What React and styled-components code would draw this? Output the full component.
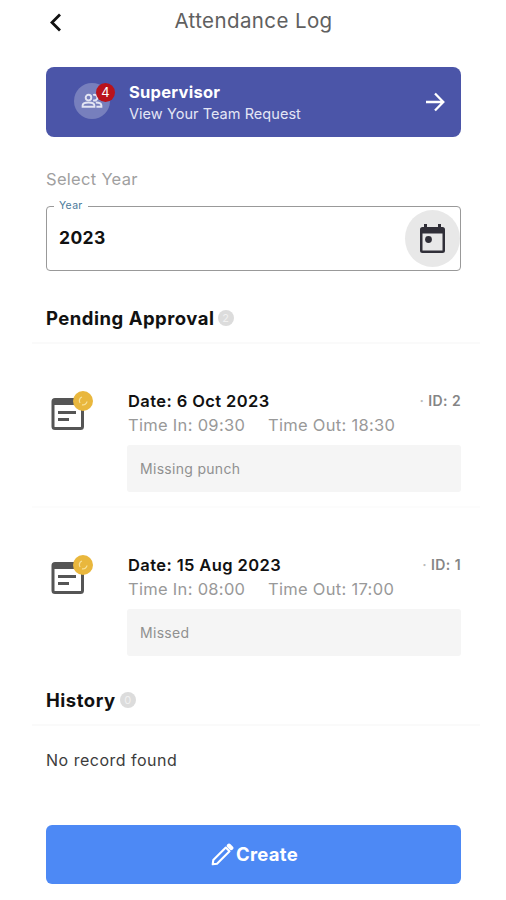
import React from "react";
import styled, { createGlobalStyle } from "styled-components";

const GlobalStyle = createGlobalStyle`
  * {
    box-sizing: border-box;
  }
  body {
    margin: 0;
    background: #fff;
    font-family: Inter, "Liberation Sans", sans-serif;
  }
`;

const Container = styled.div`
  width: 506px;
  height: 900px;
  overflow: hidden;
  padding: 0 45px 0 46px;
  color: #111;
  background: #fff;
`;

const Header = styled.header`
  display: grid;
  grid-template-columns: 20px 1fr 20px;
  align-items: center;
  height: 43px;
`;

const BackButton = styled.button`
  display: flex;
  padding: 0;
  border: 0;
  background: none;
`;

const Title = styled.h1`
  margin: 0;
  padding-bottom: 2px;
  font-size: 20.5px;
  font-weight: 400;
  line-height: 41px;
  letter-spacing: 0.4px;
  text-align: center;
  color: #606060;
`;

const Banner = styled.section`
  display: flex;
  align-items: center;
  height: 70px;
  margin-top: 24px;
  padding: 0 16px 0 28px;
  border-radius: 8px;
  color: #fff;
  background: #4b55a8;
`;

const Avatar = styled.div`
  position: relative;
  display: flex;
  align-items: center;
  justify-content: center;
  width: 36px;
  height: 36px;
  margin-bottom: 2px;
  border-radius: 50%;
  background: #777fbd;
`;

const AlertBadge = styled.span`
  position: absolute;
  top: 0;
  right: -5px;
  width: 19px;
  height: 19px;
  border-radius: 50%;
  font-size: 13px;
  line-height: 19px;
  text-align: center;
  background: #b9131b;
`;

const BannerText = styled.div`
  flex: 1;
  margin-left: 19px;
  padding-top: 1px;
`;

const BannerTitle = styled.div`
  font-size: 16.5px;
  font-weight: 700;
  line-height: 22px;
  letter-spacing: 0.25px;
`;

const BannerInfo = styled.div`
  font-size: 14.5px;
  line-height: 22px;
  letter-spacing: 0.05px;
  color: #e4e6f5;
`;

const Label = styled.div`
  margin-top: 31px;
  font-size: 16.5px;
  line-height: 22px;
  letter-spacing: 0.3px;
  color: #a0a0a0;
`;

const Field = styled.fieldset`
  height: 71px;
  margin: 10px 0 0;
  padding: 0 0 0 12px;
  border: 1.5px solid #999;
  border-radius: 4px;
`;

const Legend = styled.legend`
  margin-left: -5px;
  padding: 0 5px;
  font-size: 10.5px;
  line-height: 12px;
  letter-spacing: 0.3px;
  color: #4b7a9b;
`;

const FieldRow = styled.div`
  display: flex;
  align-items: center;
  justify-content: space-between;
  height: 58px;
  margin-top: -3px;
`;

const Year = styled.span`
  padding-bottom: 1px;
  font-size: 17.5px;
  font-weight: 700;
  letter-spacing: 0.4px;
`;

const CalendarButton = styled.button`
  display: flex;
  align-items: center;
  justify-content: center;
  width: 55px;
  height: 57px;
  padding: 0;
  border: 0;
  border-radius: 50%;
  background: #e8e8e8;
`;

const SectionHead = styled.div`
  display: flex;
  align-items: center;
  height: 38px;
  margin: ${(props) => props.$top}px -19px 0 -14px;
  padding: 0 19px 12px 14px;
  border-bottom: 2px solid #fafafa;
`;

const SectionTitle = styled.h2`
  margin: 0;
  font-size: 18.5px;
  font-weight: 700;
  line-height: 24px;
  letter-spacing: 0.5px;
`;

const Count = styled.span`
  width: 16px;
  height: 16px;
  margin-left: ${(props) => props.$gap}px;
  border-radius: 50%;
  font-size: 11px;
  line-height: 16px;
  text-align: center;
  color: #f1f1f1;
  background: #dcdcdc;
`;

const Item = styled.article`
  display: flex;
  height: 164px;
  margin: 0 -19px 0 -14px;
  padding: 45px 19px 0 14px;
  border-bottom: ${(props) => (props.$last ? "0" : "2px solid #fcfcfc")};
`;

const ItemIcon = styled.div`
  position: relative;
  flex: none;
  width: 81px;
  padding: 8px 0 0 5px;
`;

const StatusBadge = styled.span`
  position: absolute;
  top: 2px;
  left: 27px;
  display: flex;
  align-items: center;
  justify-content: center;
  width: 20px;
  height: 20px;
  border-radius: 50%;
  background: #e9b73d;
`;

const ItemBody = styled.div`
  flex: 1;
`;

const ItemTop = styled.div`
  display: flex;
  justify-content: space-between;
  padding-left: 1px;
  line-height: 24px;
`;

const DateText = styled.span`
  font-size: 16.5px;
  font-weight: 600;
  letter-spacing: 0.4px;
`;

const IdText = styled.span`
  font-size: 14px;
  font-weight: 600;
  letter-spacing: 0.4px;
  color: #858585;
`;

const Dot = styled.span`
  color: #bbb;
`;

const Times = styled.div`
  display: flex;
  padding-left: 1px;
  font-size: 16.5px;
  line-height: 24px;
  letter-spacing: 0.3px;
  color: #999;
`;

const TimeIn = styled.span`
  width: 140px;
`;

const Note = styled.p`
  height: 47px;
  margin: 8px 0 0;
  padding-left: 13px;
  border-radius: 3px;
  font-size: 14px;
  line-height: 47px;
  letter-spacing: 0.3px;
  color: #909090;
  background: #f5f5f5;
`;

const Empty = styled.p`
  margin: 22px 0 0;
  font-size: 16px;
  line-height: 24px;
  letter-spacing: 0.5px;
  color: #3c3c3c;
`;

const CreateButton = styled.button`
  display: flex;
  align-items: center;
  justify-content: center;
  gap: 2px;
  width: 100%;
  height: 59px;
  margin-top: 53px;
  padding: 0 0 1px 2px;
  border: 0;
  border-radius: 6px;
  font-family: inherit;
  font-size: 18.5px;
  font-weight: 700;
  letter-spacing: 0.3px;
  color: #fff;
  background: #4d89f5;
`;

const BackIcon = () => (
  <svg width="20" height="20" viewBox="0 0 20 20" fill="none" stroke="#111" strokeWidth="2.8">
    <path d="M14 2.5 6 10.5l8 8" />
  </svg>
);

const PeopleIcon = () => (
  <svg width="22" height="16" viewBox="0 0 22 16" fill="none" stroke="#e3e5f3" strokeWidth="1.9">
    <circle cx="7.5" cy="4.6" r="2.8" />
    <path d="M1.6 13.7v-1.2c0-2 3-3 5.9-3s5.9 1 5.9 3v1.2z" />
    <path d="M12.2 2.200a2.800 2.800 0 1 1 0 4.900M14.800 9.500c2.900 0 5.600 1 5.600 3v1.200h-5" />
  </svg>
);

const ForwardIcon = () => (
  <svg width="20" height="22" viewBox="0 0 20 22" fill="none" stroke="#fff" strokeWidth="2.3">
    <path d="M1 11h17M10 2.5 18.3 11 10 19.5" />
  </svg>
);

const CalendarIcon = () => (
  <svg width="27" height="31" viewBox="0 0 27 31">
    <path
      d="M5 1h3v3h11V1h3v3h1.5A2.5 2.5 0 0 1 26 6.5v21a2.5 2.5 0 0 1-2.5 2.5h-20A2.5 2.5 0 0 1 1 27.5v-21A2.5 2.5 0 0 1 3.5 4H5zM3.500 10.500v17h20v-17z"
      fill="#302f38"
      fillRule="evenodd"
    />
    <circle cx="9.5" cy="16.5" r="3.4" fill="#302f38" />
  </svg>
);

const LogIcon = () => (
  <svg width="34" height="34" viewBox="0 0 34 34" fill="none">
    <rect x="2" y="2.5" width="29.5" height="29" rx="2" stroke="#555" strokeWidth="3" />
    <path d="M2 2h29v6H2z" fill="#555" />
    <path d="M7 15.5h18M7 22.5h11" stroke="#555" strokeWidth="3" />
  </svg>
);

const PendingIcon = () => (
  <svg width="12" height="12" viewBox="0 0 12 12" fill="none" stroke="#f7e19a" strokeWidth="1.3">
    <path d="M5 2A4 4 0 0 0 3 8M5 9.8A4 4 0 0 0 10 6.5" />
  </svg>
);

const PencilIcon = () => (
  <svg width="23" height="23" viewBox="0 0 23 23" fill="none" stroke="#fff" strokeWidth="2.1">
    <path d="M1.7 21.3 2.3 17 14.8 4.5l3.7 3.7L6 20.7z" strokeLinejoin="round" />
    <path d="m18 2.800 2.200 2.200" strokeWidth="4.4" strokeLinecap="round" />
  </svg>
);

const requests = [
  { id: 2, date: "6 Oct 2023", timeIn: "09:30", timeOut: "18:30", note: "Missing punch" },
  { id: 1, date: "15 Aug 2023", timeIn: "08:00", timeOut: "17:00", note: "Missed" },
];

const Request = ({ item, last }) => {
  return (
    <Item $last={last}>
      <ItemIcon>
        <LogIcon />
        <StatusBadge>
          <PendingIcon />
        </StatusBadge>
      </ItemIcon>
      <ItemBody>
        <ItemTop>
          <DateText>Date: {item.date}</DateText>
          <IdText>
            <Dot>·</Dot> ID: {item.id}
          </IdText>
        </ItemTop>
        <Times>
          <TimeIn>Time In: {item.timeIn}</TimeIn>
          <span>Time Out: {item.timeOut}</span>
        </Times>
        <Note>{item.note}</Note>
      </ItemBody>
    </Item>
  );
};

const App = () => {
  return (
    <Container>
      <GlobalStyle />
      <Header>
        <BackButton aria-label="Back">
          <BackIcon />
        </BackButton>
        <Title>Attendance Log</Title>
      </Header>
      <Banner>
        <Avatar>
          <PeopleIcon />
          <AlertBadge>4</AlertBadge>
        </Avatar>
        <BannerText>
          <BannerTitle>Supervisor</BannerTitle>
          <BannerInfo>View Your Team Request</BannerInfo>
        </BannerText>
        <ForwardIcon />
      </Banner>
      <Label>Select Year</Label>
      <Field>
        <Legend>Year</Legend>
        <FieldRow>
          <Year>2023</Year>
          <CalendarButton aria-label="Pick a year">
            <CalendarIcon />
          </CalendarButton>
        </FieldRow>
      </Field>
      <SectionHead $top={35}>
        <SectionTitle>Pending Approval</SectionTitle>
        <Count $gap={3}>2</Count>
      </SectionHead>
      {requests.map((item, i) => (
        <Request key={item.id} item={item} last={i === requests.length - 1} />
      ))}
      <SectionHead $top={16}>
        <SectionTitle>History</SectionTitle>
        <Count $gap={4}>0</Count>
      </SectionHead>
      <Empty>No record found</Empty>
      <CreateButton>
        <PencilIcon />
        Create
      </CreateButton>
    </Container>
  );
};

export default App;
